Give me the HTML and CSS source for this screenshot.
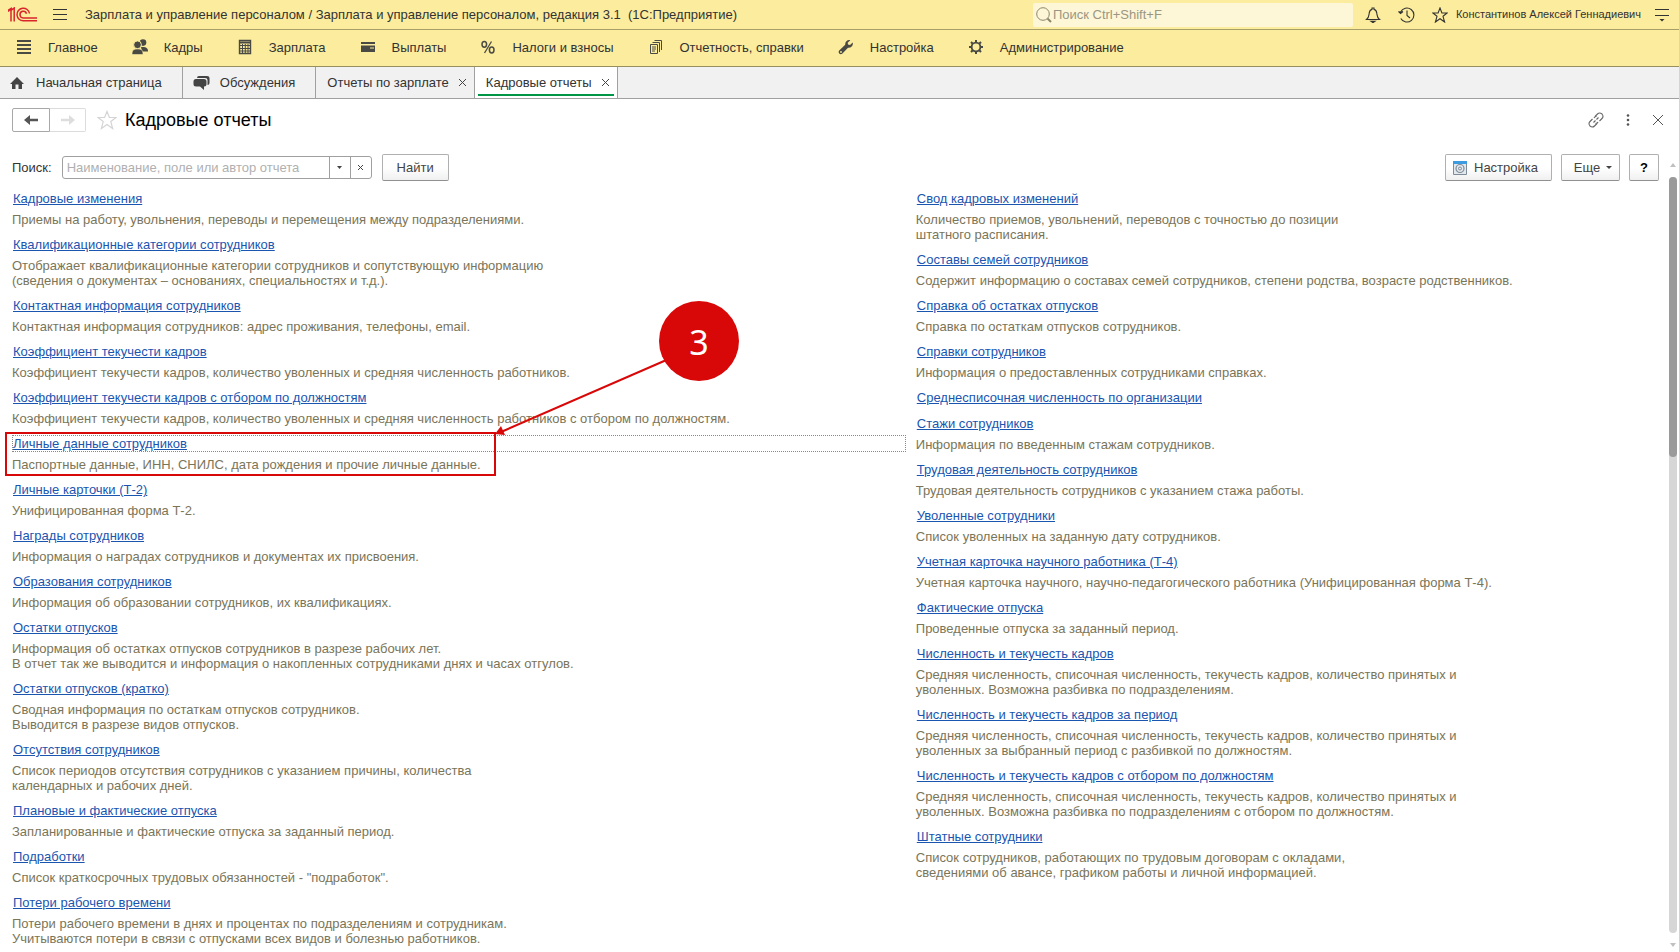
FILE: index.html
```html
<!DOCTYPE html>
<html lang="ru">
<head>
<meta charset="utf-8">
<title>Кадровые отчеты</title>
<link rel="stylesheet" href="styles.css">
</head>
<body>
<header class="titlebar">
  <svg class="logo" width="30" height="16" viewBox="0 0 30 16" fill="none" stroke="#d9252b"><path d="M0 4.5L3 2V14.500M6.200 14.500V1L3 3.500M0 3.500L4 .8" stroke-width="1.500"/><path d="M21.500 6.500A6.300 6.300 0 1 0 15.500 13.800H29" stroke-width="1.500"/><path d="M18.500 6.800A3.300 3.300 0 1 0 15.500 10.900H29" stroke-width="1.500"/></svg>
  <button class="bare" aria-label="Меню"><svg width="14" height="12" viewBox="0 0 14 12" stroke="#333"><path d="M0 .5H14M0 5.5H14M0 10.5H14"/></svg></button>
  <div class="app-name">Зарплата и управление персоналом / Зарплата и управление персоналом, редакция 3.1&nbsp; (1С:Предприятие)</div>
  <label class="global-search">
    <svg width="16" height="16" viewBox="0 0 16 16" fill="none" stroke="#8c876c"><circle cx="7" cy="7" r="6.3"/><path d="M11.5 11.5L15 15" stroke-width="2"/></svg>
    <input type="text" placeholder="Поиск Ctrl+Shift+F" aria-label="Поиск">
  </label>
  <div class="tools">
    <button class="bare" aria-label="Уведомления"><svg width="16" height="16" viewBox="0 0 16 16" fill="none" stroke="#333" stroke-width="1.1"><path d="M1.5 12.5C4 10.5 3.8 9 4.2 6.2C4.6 3.6 6 2.6 7 2.4V1h2v1.4C10 2.6 11.400 3.600 11.800 6.200C12.200 9 12 10.500 14.500 12.500Z"/><path d="M6 14.2h4L8 15.600Z" fill="#333"/></svg></button>
    <button class="bare" aria-label="История"><svg width="17" height="16" viewBox="0 0 17 16" fill="none" stroke="#333" stroke-width="1.1"><path d="M2.600 5A7 7 0 1 1 2.800 11.500M9 3.500V8.500L12 11"/><path d="M.5 4.500L2.600 6.500L5 4.500" fill="#333"/></svg></button>
    <button class="bare" aria-label="Избранное"><svg width="16" height="16" viewBox="0 0 16 16" fill="none" stroke="#333" stroke-width="1.100"><path d="M8 1L9.900 6H15.200L11 9.300L12.600 15L8 11.700L3.400 15L5 9.300L.8 6H6.100Z"/></svg></button>
  </div>
  <a class="user" href="#">Константинов Алексей Геннадиевич</a>
  <button class="bare" aria-label="Настройки окна"><svg width="14" height="14" viewBox="0 0 14 14" stroke="#333"><path d="M0 1.500H14M0 7.500H14"/><path d="M4.500 11H9.500L7 13.500Z" fill="#333" stroke="none"/></svg></button>
</header>
<nav class="sections">
  <a href="#"><svg width="16" height="16" viewBox="0 0 16 16" stroke="#4a4a45" stroke-width="2"><path d="M1 2H15M1 6H15M1 10H15M1 14H15"/></svg>Главное</a>
  <a href="#"><svg width="16" height="16" viewBox="0 0 16 16" fill="#4a4a45"><circle cx="11" cy="3.600" r="3.300"/><path d="M9 8H12C15 8.800 16 9.500 16 12.500H10Z"/><circle cx="5.500" cy="5.800" r="3.900" stroke="#fbec9e"/><path d="M0 15.500C0 11.500 1 10.500 4 10H7C10 10.500 11 11.500 11 15.500Z" stroke="#fbec9e" stroke-width=".6"/></svg>Кадры</a>
  <a href="#"><svg width="16" height="16" viewBox="0 0 16 16" fill="none" stroke="#4a4a45"><path d="M2.500 1.500H13.500V14.500H2.500Z" stroke-width="1.400"/><path d="M2 3.500H14" stroke-width="2"/><path d="M2 6.500H14M2 9.500H14M2 12H14M5.500 5V14M8.300 5V14M11 5V14"/></svg>Зарплата</a>
  <a href="#"><svg width="16" height="16" viewBox="0 0 16 16" fill="#4a4a45"><path d="M1 3H15V5H1ZM1 6.500H15V13H1Z"/><path d="M10 9H14" stroke="#fbec9e"/></svg>Выплаты</a>
  <a href="#"><svg width="16" height="16" viewBox="0 0 16 16" fill="none" stroke="#4a4a45" stroke-width="1.500"><ellipse cx="4.300" cy="5.300" rx="2.300" ry="2.900"/><ellipse cx="11.700" cy="11" rx="2.300" ry="2.900"/><path d="M11.500 2.500L4.500 14" stroke-width="1.300"/></svg>Налоги и взносы</a>
  <a href="#"><svg width="16" height="16" viewBox="0 0 16 16" fill="none" stroke="#4a4a45"><path d="M2.500 5.500H9.500V14.500H2.500ZM4.500 3.500H11.500V13M6.500 1.500H13.500V11M4 8H8M4 10H8M4 12H7"/></svg>Отчетность, справки</a>
  <a href="#"><svg width="16" height="16" viewBox="0 0 16 16" fill="#4a4a45"><path d="M14.700 3.500L12 6L10 5.500L9.700 3.700L12.300 1.200C9.500.6 7 2.500 7.200 5.700L1.200 11.600C-.5 13.700 2 16.200 4.200 14.700L10 8.700C13.500 9 15.500 6.500 14.700 3.500Z"/><circle cx="3" cy="13" r=".9" fill="#fbec9e"/></svg>Настройка</a>
  <a href="#"><svg width="16" height="16" viewBox="0 0 16 16" fill="none" stroke="#4a4a45"><circle cx="8" cy="8" r="4.400" stroke-width="1.900"/><path d="M8 1V3.500M8 12.500V15M1 8H3.500M12.500 8H15M3 3L5 5M11 11L13 13M13 3L11 5M5 11L3 13" stroke-width="2"/></svg>Администрирование</a>
</nav>
<nav class="tabs">
  <a class="tab" href="#"><svg width="16" height="14" viewBox="0 0 16 14" fill="#444"><path d="M7 1L14 8H12V13H8.500V8.500H5.500V13H2V8H0Z"/></svg>Начальная страница</a>
  <a class="tab" href="#"><svg width="17" height="16" viewBox="0 0 17 16" fill="#444"><path d="M6 1H14Q16.500 1 16.500 3V8Q16.500 10 14.500 10V5Q14.500 3 12 3H4Q4 1 6 1Z"/><path d="M3 4H11Q13.500 4 13.500 6.500V9Q13.500 11.500 11 11.500V15L7 11.500H3Q.5 11.500 .5 9V6.500Q.5 4 3 4Z"/></svg>Обсуждения</a>
  <div class="tab closable"><a href="#">Отчеты по зарплате</a><button class="bare" aria-label="Закрыть"><svg width="9" height="9" viewBox="0 0 9 9" stroke="#444"><path d="M1 1L8 8M8 1L1 8"/></svg></button></div>
  <div class="tab closable active"><a href="#">Кадровые отчеты</a><button class="bare" aria-label="Закрыть"><svg width="9" height="9" viewBox="0 0 9 9" stroke="#444"><path d="M1 1L8 8M8 1L1 8"/></svg></button></div>
</nav>
<main class="page">
  <div class="heading">
    <div class="history">
      <button aria-label="Назад"><svg width="14" height="12" viewBox="0 0 14 12" fill="#555"><path d="M0 6L6 1V4.700H14V7.300H6V11Z"/></svg></button>
      <button aria-label="Вперед" disabled><svg width="14" height="12" viewBox="0 0 14 12" fill="#ddd"><path d="M14 6L8 1V4.700H0V7.300H8V11Z"/></svg></button>
    </div>
    <button class="bare" aria-label="В избранное"><svg width="20" height="20" viewBox="0 0 20 20" fill="none" stroke="#d4d4d4" stroke-width="1.200"><path d="M10 1.500L12.400 7.500H19L13.800 11.600L15.600 18.500L10 14.500L4.400 18.500L6.200 11.600L1 7.500H7.600Z"/></svg></button>
    <h1>Кадровые отчеты</h1>
    <div class="window-tools">
      <button class="bare" aria-label="Ссылка"><svg width="16" height="16" viewBox="0 0 16 16" fill="none" stroke="#666" stroke-width="1.100"><path d="M7 4.500L9.500 2Q11.500 0 14 2Q16 4.500 14 6.500L11.500 9M9 11.500L6.500 14Q4.500 16 2 14Q0 11.500 2 9.500L4.500 7M5.500 10.500L7.500 8.500M8.500 7.500L10.500 5.500M7.500 11.500Q9.500 11.500 10 10M6 6Q6.500 4.500 8.500 4.500"/></svg></button>
      <button class="bare" aria-label="Еще"><svg width="4" height="12" viewBox="0 0 4 12" fill="#555"><circle cx="2" cy="1.500" r="1.300"/><circle cx="2" cy="6" r="1.300"/><circle cx="2" cy="10.500" r="1.300"/></svg></button>
      <button class="bare" aria-label="Закрыть"><svg width="12" height="12" viewBox="0 0 12 12" stroke="#555"><path d="M1 1L11 11M11 1L1 11"/></svg></button>
    </div>
  </div>
  <div class="toolbar">
    <label for="report-search">Поиск:</label>
    <div class="combo">
      <input id="report-search" type="text" placeholder="Наименование, поле или автор отчета">
      <button aria-label="Выбрать"><svg width="5" height="3" viewBox="0 0 5 3" fill="#444"><path d="M0 0H5L2.500 3Z"/></svg></button>
      <button aria-label="Очистить"><svg width="7" height="7" viewBox="0 0 7 7" stroke="#444"><path d="M1 1L6 6M6 1L1 6"/></svg></button>
    </div>
    <button class="btn find">Найти</button>
    <button class="btn settings"><svg width="14" height="14" viewBox="0 0 14 14" fill="none"><path d="M.5.5H13.500V13.500H.5Z" fill="#e4e9ee" stroke="#7e8c9a"/><path d="M0 0H14V3H0Z" fill="#3d9be0"/><circle cx="7" cy="7.500" r="4" fill="#e4e9ee" stroke="#7e8c9a" stroke-width="1.200"/><circle cx="7" cy="7.500" r="1.500" stroke="#7e8c9a"/></svg>Настройка</button>
    <button class="btn more">Еще<svg width="6" height="3" viewBox="0 0 6 3" fill="#444"><path d="M0 0H6L3 3Z"/></svg></button>
    <button class="btn help">?</button>
  </div>
  <div class="content">
    <div class="reports">
      <section class="column">
        <article><a href="#">Кадровые изменения</a><p>Приемы на работу, увольнения, переводы и перемещения между подразделениями.</p></article>
        <article><a href="#">Квалификационные категории сотрудников</a><p>Отображает квалификационные категории сотрудников и сопутствующую информацию<br>(сведения о документах – основаниях, специальностях и т.д.).</p></article>
        <article><a href="#">Контактная информация сотрудников</a><p>Контактная информация сотрудников: адрес проживания, телефоны, email.</p></article>
        <article><a href="#">Коэффициент текучести кадров</a><p>Коэффициент текучести кадров, количество уволенных и средняя численность работников.</p></article>
        <article><a href="#">Коэффициент текучести кадров с отбором по должностям</a><p>Коэффициент текучести кадров, количество уволенных и средняя численность работников с отбором по должностям.</p></article>
        <article class="selected"><a href="#">Личные данные сотрудников</a><p>Паспортные данные, ИНН, СНИЛС, дата рождения и прочие личные данные.</p>
          <div class="callout-frame"></div>
          <svg class="callout-arrow" width="180" height="80" viewBox="0 0 180 80"><path d="M178 2L8 76" stroke="#d90808" stroke-width="2"/><path d="M2 78L8 70L12 79Z" fill="#d90808"/></svg>
          <div class="callout-number">3</div>
        </article>
        <article><a href="#">Личные карточки (Т-2)</a><p>Унифицированная форма Т-2.</p></article>
        <article><a href="#">Награды сотрудников</a><p>Информация о наградах сотрудников и документах их присвоения.</p></article>
        <article><a href="#">Образования сотрудников</a><p>Информация об образовании сотрудников, их квалификациях.</p></article>
        <article><a href="#">Остатки отпусков</a><p>Информация об остатках отпусков сотрудников в разрезе рабочих лет.<br>В отчет так же выводится и информация о накопленных сотрудниками днях и часах отгулов.</p></article>
        <article><a href="#">Остатки отпусков (кратко)</a><p>Сводная информация по остаткам отпусков сотрудников.<br>Выводится в разрезе видов отпусков.</p></article>
        <article><a href="#">Отсутствия сотрудников</a><p>Список периодов отсутствия сотрудников с указанием причины, количества<br>календарных и рабочих дней.</p></article>
        <article><a href="#">Плановые и фактические отпуска</a><p>Запланированные и фактические отпуска за заданный период.</p></article>
        <article><a href="#">Подработки</a><p>Список краткосрочных трудовых обязанностей - "подработок".</p></article>
        <article><a href="#">Потери рабочего времени</a><p>Потери рабочего времени в днях и процентах по подразделениям и сотрудникам.<br>Учитываются потери в связи с отпусками всех видов и болезнью работников.</p></article>
      </section>
      <section class="column">
        <article><a href="#">Свод кадровых изменений</a><p>Количество приемов, увольнений, переводов с точностью до позиции<br>штатного расписания.</p></article>
        <article><a href="#">Составы семей сотрудников</a><p>Содержит информацию о составах семей сотрудников, степени родства, возрасте родственников.</p></article>
        <article><a href="#">Справка об остатках отпусков</a><p>Справка по остаткам отпусков сотрудников.</p></article>
        <article><a href="#">Справки сотрудников</a><p>Информация о предоставленных сотрудниками справках.</p></article>
        <article><a href="#">Среднесписочная численность по организации</a></article>
        <article><a href="#">Стажи сотрудников</a><p>Информация по введенным стажам сотрудников.</p></article>
        <article><a href="#">Трудовая деятельность сотрудников</a><p>Трудовая деятельность сотрудников с указанием стажа работы.</p></article>
        <article><a href="#">Уволенные сотрудники</a><p>Список уволенных на заданную дату сотрудников.</p></article>
        <article><a href="#">Учетная карточка научного работника (Т-4)</a><p>Учетная карточка научного, научно-педагогического работника (Унифицированная форма Т-4).</p></article>
        <article><a href="#">Фактические отпуска</a><p>Проведенные отпуска за заданный период.</p></article>
        <article><a href="#">Численность и текучесть кадров</a><p>Средняя численность, списочная численность, текучесть кадров, количество принятых и<br>уволенных. Возможна разбивка по подразделениям.</p></article>
        <article><a href="#">Численность и текучесть кадров за период</a><p>Средняя численность, списочная численность, текучесть кадров, количество принятых и<br>уволенных за выбранный период с разбивкой по должностям.</p></article>
        <article><a href="#">Численность и текучесть кадров с отбором по должностям</a><p>Средняя численность, списочная численность, текучесть кадров, количество принятых и<br>уволенных. Возможна разбивка по подразделениям с отбором по должностям.</p></article>
        <article><a href="#">Штатные сотрудники</a><p>Список сотрудников, работающих по трудовым договорам с окладами,<br>сведениями об авансе, графиком работы и личной информацией.</p></article>
      </section>
    </div>
    <div class="scrollbar" aria-hidden="true">
      <svg width="6" height="4" viewBox="0 0 6 4" fill="#c0c0c0"><path d="M3 0L6 4H0Z"/></svg>
      <div class="track"><div class="thumb"></div></div>
      <svg width="6" height="4" viewBox="0 0 6 4" fill="#c0c0c0"><path d="M0 0H6L3 4Z"/></svg>
    </div>
  </div>
</main>
</body>
</html>
```
FILE: styles.css
```css
* { box-sizing: border-box; }
body {
  margin: 0;
  min-height: 100vh;
  display: flex;
  flex-direction: column;
  background: #fff;
  color: #333;
  font: 13px/15px "Liberation Sans", Arial, sans-serif;
}
svg { display: block; flex: none; }
a { color: inherit; text-decoration: none; }
button, input { font: inherit; color: inherit; }
.bare { border: 0; padding: 0; background: none; }

.titlebar {
  display: flex;
  align-items: center;
  height: 30px;
  padding: 0 10px 0 8px;
  background: #fbec9e;
  border-bottom: 1px solid #a89f68;
}
.app-name { margin-left: 18px; }
.logo { margin-right: 15px; }
.global-search {
  display: flex;
  align-items: center;
  gap: 1px;
  width: 320px;
  height: 24px;
  margin-left: auto;
  padding-left: 3px;
  background: #fdf7d8;
  border-radius: 2px;
}
.global-search input {
  flex: 1;
  min-width: 0;
  padding: 0;
  border: 0;
  background: none;
  outline: 0;
}
.global-search input::placeholder { color: #9a9682; }
.tools { display: flex; gap: 17px; margin: 0 8px 0 12px; }
.user { margin-right: 14px; font-size: 11px; }

.sections {
  display: flex;
  align-items: center;
  gap: 34px;
  height: 37px;
  padding: 0 16px 2px;
  background: #fbec9e;
  border-bottom: 1px solid #978f5f;
}
.sections a { display: flex; align-items: center; gap: 16px; }

.tabs {
  display: flex;
  height: 32px;
  background: #f1f1f1;
  border-bottom: 1px solid #a0a0a0;
}
.tab {
  display: flex;
  align-items: center;
  gap: 10px;
  padding: 0 20px 0 10px;
  border-right: 1px solid #a0a0a0;
}
.tab.closable { position: relative; gap: 9px; padding: 0 7px 0 11px; }
.tab.active { background: #fff; }
.tab.active::after {
  content: "";
  position: absolute;
  left: 3px;
  right: 3px;
  bottom: 2px;
  height: 2px;
  background: #009646;
}

.page { flex: 1; display: flex; flex-direction: column; }
.heading {
  display: flex;
  align-items: center;
  height: 24px;
  margin: 9px 15px 0 12px;
}
.history { display: flex; margin-right: 11px; }
.history button {
  display: flex;
  align-items: center;
  justify-content: center;
  width: 38px;
  height: 24px;
  padding: 0;
  background: #fff;
  border: 1px solid #a8a8a8;
  border-radius: 2px 0 0 2px;
}
.history button:disabled { width: 36px; border-color: #dcdcdc; border-left: 0; border-radius: 0 2px 2px 0; }
h1 {
  margin: 0 0 0 8px;
  color: #000;
  font-size: 18px;
  line-height: 22px;
  font-weight: normal;
}
.window-tools { display: flex; align-items: center; gap: 22px; margin-left: auto; }

.toolbar {
  display: flex;
  align-items: center;
  height: 27px;
  margin: 22px 20px 0 12px;
}
.combo {
  display: flex;
  width: 310px;
  height: 23px;
  margin: 0 10px;
  border: 1px solid #a0a0a0;
  border-radius: 3px;
}
.combo input { flex: 1; min-width: 0; padding: 0 4px; border: 0; background: none; outline: 0; }
.combo input::placeholder { color: #b0b0b0; }
.combo button {
  display: flex;
  align-items: center;
  justify-content: center;
  width: 21px;
  padding: 0;
  border: 0;
  border-left: 1px solid #a0a0a0;
  background: none;
}
.btn {
  display: flex;
  align-items: center;
  justify-content: center;
  height: 27px;
  padding: 0 7px;
  background: linear-gradient(#fff 50%, #f0f0f0);
  border: 1px solid #b0b0b0;
  border-bottom-color: #909090;
  border-radius: 2px;
  color: #444;
}
.find { width: 67px; }
.settings { width: 107px; gap: 7px; margin-left: auto; justify-content: flex-start; }
.more { width: 59px; gap: 6px; margin: 0 9px; padding-left: 12px; }
.help { width: 30px; color: #000; font-weight: bold; }

.content { flex: 1; display: flex; margin-left: 12px; }
.reports {
  flex: 1;
  display: grid;
  grid-template-columns: 544fr 456fr;
  gap: 10px;
  padding-top: 9px;
}
.column { display: flex; flex-direction: column; gap: 9px; }
article a {
  display: block;
  padding: 1px;
  line-height: 15px;
  color: #1a55b0;
  text-decoration: underline;
}
article p { margin: 5px 0 0; color: #7a7559; }
.selected { position: relative; }
.selected a { outline: 1px dotted #888; outline-offset: -1px; }
.callout-frame {
  position: absolute;
  left: -7px;
  top: -3px;
  width: 491px;
  height: 44px;
  border: 2px solid #d90808;
}
.callout-arrow { position: absolute; left: 481px; top: -79px; }
.callout-number {
  position: absolute;
  left: 647px;
  top: -134px;
  width: 80px;
  height: 80px;
  border-radius: 50%;
  background: #d90808;
  color: #fff;
  font: 34px/82px "Noto Sans", "Open Sans", sans-serif;
  text-align: center;
}
.scrollbar {
  display: flex;
  flex-direction: column;
  align-items: center;
  gap: 10px;
  width: 8px;
  margin: -18px 2px 5px 4px;
}
.track { flex: 1; width: 8px; border-radius: 4px; background: #d6d6d6; }
.thumb { height: 37%; border-radius: 4px; background: #9a9a9a; }
```
